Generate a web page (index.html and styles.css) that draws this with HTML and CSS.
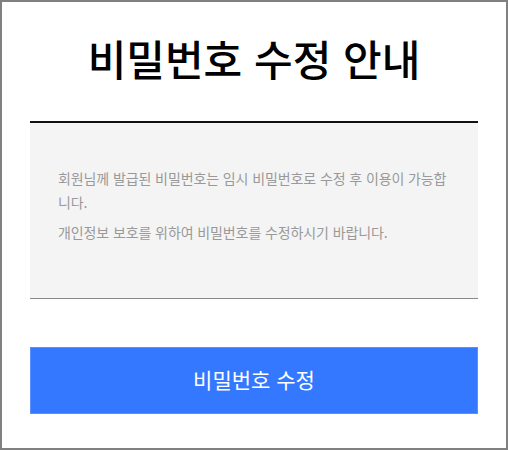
FILE: index.html
```html
<!DOCTYPE html>
<html lang="ko">
<head>
<meta charset="utf-8">
<link rel="stylesheet" href="styles.css">
</head>
<body>
<div class="frame">
  <h1 class="title">비밀번호 수정 안내</h1>
  <div class="notice">
    <p>회원님께 발급된 비밀번호는 임시 비밀번호로 수정 후 이용이 가능합니다.</p>
    <p>개인정보 보호를 위하여 비밀번호를 수정하시기 바랍니다.</p>
  </div>
  <button class="btn" type="button">비밀번호 수정</button>
</div>
</body>
</html>
```
FILE: styles.css
```css
html, body {
  margin: 0;
  padding: 0;
  background: #fff;
}
.frame {
  box-sizing: border-box;
  width: 508px;
  height: 450px;
  border: 2px solid #808080;
  padding: 0 28px;
  font-family: "Noto Sans CJK KR", "Noto Sans", sans-serif;
}
.title {
  margin: 0;
  padding-top: 24px;
  height: 119px;
  box-sizing: border-box;
  font-size: 42px;
  line-height: 64px;
  font-weight: 500;
  text-align: center;
  color: #000;
}
.notice {
  box-sizing: border-box;
  height: 178px;
  background: #f4f4f4;
  border-top: 2px solid #111;
  border-bottom: 1px solid #888;
  padding: 43px 28px 0 28px;
}
.notice p {
  margin: 0 0 6px 0;
  font-size: 14px;
  line-height: 24px;
  color: #999;
  letter-spacing: -0.1px;
}
.btn {
  display: block;
  width: 100%;
  height: 67px;
  margin-top: 48px;
  background: #3478ff;
  border: 1px solid #5a8fff;
  color: #fff;
  font-family: "Noto Sans CJK KR", "Noto Sans", sans-serif;
  font-size: 21px;
  font-weight: 400;
  padding: 0 0 3px 0;
}
```
